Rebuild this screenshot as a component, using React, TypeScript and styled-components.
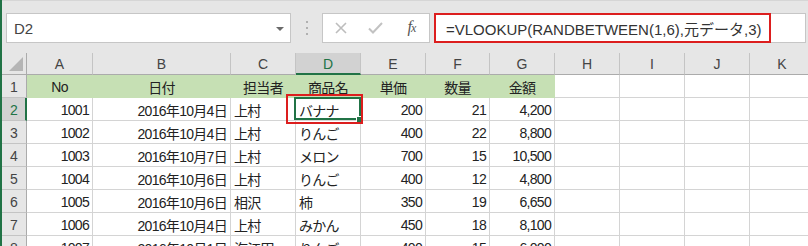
import styled, { createGlobalStyle, css } from "styled-components";

const GlobalStyle = createGlobalStyle`
  html, body {
    margin: 0;
    padding: 0;
    background: #e6e6e6;
  }
  body {
    font-family: "Liberation Sans", "Noto Sans CJK JP", sans-serif;
  }
`;

const GREEN = "#217346";

const Window = styled.div`
  width: 808px;
  height: 246px;
  overflow: hidden;
  box-sizing: border-box;
  border-left: 2px solid ${GREEN};
  background: #e6e6e6;
  display: flex;
  flex-direction: column;
`;

const FormulaBar = styled.div`
  display: flex;
  height: 30px;
  padding: 12px 2px 10px 4px;
  border-top: 1px solid #d6d6d6;
  flex-shrink: 0;
`;

const NameBox = styled.div`
  width: 285px;
  box-sizing: border-box;
  background: #fff;
  border: 1px solid #c6c6c6;
  display: flex;
  align-items: center;
  justify-content: space-between;
  padding: 0 6px 0 7px;
  font-size: 15px;
  color: #444;
`;

const DropArrow = styled.span`
  width: 0;
  height: 0;
  border-left: 4px solid transparent;
  border-right: 4px solid transparent;
  border-top: 4px solid #6a6a6a;
  margin-top: 2px;
`;

const Grip = styled.div`
  width: 31px;
  display: flex;
  flex-direction: column;
  align-items: center;
  justify-content: center;
  gap: 4px;
`;

const GripDot = styled.span`
  width: 2px;
  height: 2px;
  background: #b0b0b0;
`;

const ButtonBox = styled.div`
  width: 108px;
  box-sizing: border-box;
  background: #fff;
  border: 1px solid #c6c6c6;
  display: flex;
  margin-right: 4px;
`;

const BarButton = styled.div`
  width: 36px;
  display: flex;
  align-items: center;
  justify-content: center;
`;

const Fx = styled.span`
  font-family: "Liberation Serif", serif;
  font-style: italic;
  font-size: 16px;
  color: #555;
  letter-spacing: -1px;
  margin-top: -2px;

  small {
    font-size: 12px;
  }
`;

const FormulaBox = styled.div`
  flex: 1;
  background: #fff;
  border: 1px solid #c6c6c6;
  display: flex;
`;

const Highlight = styled.div`
  width: 337px;
  box-sizing: border-box;
  margin: -1px 0 -1px -1px;
  border: 2px solid #dc1e1e;
  display: flex;
  align-items: center;
  padding-left: 10px;
  font-size: 15px;
  color: #333;
  white-space: nowrap;
`;

const Sheet = styled.div`
  display: grid;
  grid-template-columns: 25px 66px 138px 65px 65px 65px 64px 65px 65px 65px 65px 65px;
  grid-template-rows: 22px repeat(8, 23px);
`;

const Corner = styled.div`
  box-sizing: border-box;
  position: relative;
  border-right: 1px solid #ababab;
  border-bottom: 1px solid #ababab;
  background: #e6e6e6;

  &::after {
    content: "";
    position: absolute;
    right: 3px;
    bottom: 3px;
    border-left: 14px solid transparent;
    border-bottom: 14px solid #b5b5b5;
  }
`;

const ColHead = styled.div<{ $active?: boolean }>`
  box-sizing: border-box;
  display: flex;
  align-items: center;
  justify-content: center;
  font-size: 14px;
  color: #444;
  background: #e6e6e6;
  border-right: 1px solid #c4c4c4;
  border-bottom: 1px solid #ababab;
  padding-top: 1px;

  ${({ $active }) =>
    $active &&
    css`
      background: #d2d2d2;
      color: ${GREEN};
      border-bottom: 2px solid ${GREEN};
      padding-top: 2px;
    `}
`;

const RowHead = styled.div<{ $active?: boolean }>`
  box-sizing: border-box;
  display: flex;
  align-items: center;
  justify-content: center;
  font-size: 14px;
  color: #444;
  background: #e6e6e6;
  border-right: 1px solid #ababab;
  border-bottom: 1px solid #c4c4c4;
  padding-top: 1px;

  ${({ $active }) =>
    $active &&
    css`
      background: #d2d2d2;
      color: ${GREEN};
      border-right: 2px solid ${GREEN};
      padding-left: 1px;
    `}
`;

type Align = "left" | "right" | "center";

const Cell = styled.div<{ $align: Align; $fill?: boolean; $active?: boolean }>`
  box-sizing: border-box;
  display: flex;
  align-items: center;
  justify-content: ${({ $align }) =>
    $align === "left" ? "flex-start" : $align === "right" ? "flex-end" : "center"};
  padding: 1px 3px 0 3px;
  font-size: 14px;
  letter-spacing: -0.7px;
  color: #222;
  white-space: nowrap;
  background: #fff;
  border-right: 1px solid #d4d4d4;
  border-bottom: 1px solid #d4d4d4;

  ${({ $fill }) =>
    $fill &&
    css`
      background: #c6e0b4;
      border-color: #c6e0b4;
    `}

  ${({ $active }) =>
    $active &&
    css`
      position: relative;
      z-index: 2;
    `}
`;

const SelectionFrame = styled.span`
  position: absolute;
  left: -2px;
  top: -1px;
  right: -1px;
  bottom: 0;
  border: 2px solid ${GREEN};
`;

const FillHandle = styled.span`
  position: absolute;
  right: -3px;
  bottom: -3px;
  width: 5px;
  height: 5px;
  background: ${GREEN};
  border: 1px solid #fff;
`;

const Annotation = styled.span`
  position: absolute;
  left: -10px;
  top: -4px;
  right: -3px;
  bottom: -4px;
  border: 2px solid #dc1e1e;
`;

const columns = ["A", "B", "C", "D", "E", "F", "G", "H", "I", "J", "K"];
const align: Align[] = ["right", "right", "left", "left", "right", "right", "right"];
const headers = ["No", "日付", "担当者", "商品名", "単価", "数量", "金額"];

const rows = [
  ["1001", "2016年10月4日", "上村", "バナナ", "200", "21", "4,200"],
  ["1002", "2016年10月4日", "上村", "りんご", "400", "22", "8,800"],
  ["1003", "2016年10月7日", "上村", "メロン", "700", "15", "10,500"],
  ["1004", "2016年10月6日", "上村", "りんご", "400", "12", "4,800"],
  ["1005", "2016年10月6日", "相沢", "柿", "350", "19", "6,650"],
  ["1006", "2016年10月4日", "上村", "みかん", "450", "18", "8,100"],
  ["1007", "2016年10月1日", "海江田", "りんご", "400", "15", "6,000"],
];

const CancelIcon = () => (
  <svg width="14" height="14" viewBox="0 0 14 14">
    <path d="M2 2 L12 12 M12 2 L2 12" stroke="#bdbdbd" strokeWidth="1.6" fill="none" />
  </svg>
);

const CheckIcon = () => (
  <svg width="15" height="12" viewBox="0 0 15 12">
    <path d="M1 6.5 L5 10.5 L14 1" stroke="#c2c2c2" strokeWidth="2" fill="none" />
  </svg>
);

export default function App() {
  return (
    <>
      <GlobalStyle />
      <Window>
        <FormulaBar>
          <NameBox>
            <span>D2</span>
            <DropArrow />
          </NameBox>
          <Grip>
            <GripDot />
            <GripDot />
            <GripDot />
          </Grip>
          <ButtonBox>
            <BarButton>
              <CancelIcon />
            </BarButton>
            <BarButton>
              <CheckIcon />
            </BarButton>
            <BarButton>
              <Fx>
                f<small>x</small>
              </Fx>
            </BarButton>
          </ButtonBox>
          <FormulaBox>
            <Highlight>=VLOOKUP(RANDBETWEEN(1,6),元データ,3)</Highlight>
          </FormulaBox>
        </FormulaBar>

        <Sheet>
          <Corner />
          {columns.map((c) => (
            <ColHead key={c} $active={c === "D"}>
              {c}
            </ColHead>
          ))}

          <RowHead>1</RowHead>
          {columns.map((c, i) => (
            <Cell key={c} $align="center" $fill={i < headers.length}>
              {headers[i] ?? ""}
            </Cell>
          ))}

          {rows.map((row, r) => (
            <>
              <RowHead key={`h${r}`} $active={r === 0}>
                {r + 2}
              </RowHead>
              {columns.map((c, i) => {
                const active = r === 0 && c === "D";
                return (
                  <Cell key={`${r}-${c}`} $align={align[i] ?? "left"} $active={active}>
                    {row[i] ?? ""}
                    {active && (
                      <>
                        <SelectionFrame />
                        <FillHandle />
                        <Annotation />
                      </>
                    )}
                  </Cell>
                );
              })}
            </>
          ))}
        </Sheet>
      </Window>
    </>
  );
}
